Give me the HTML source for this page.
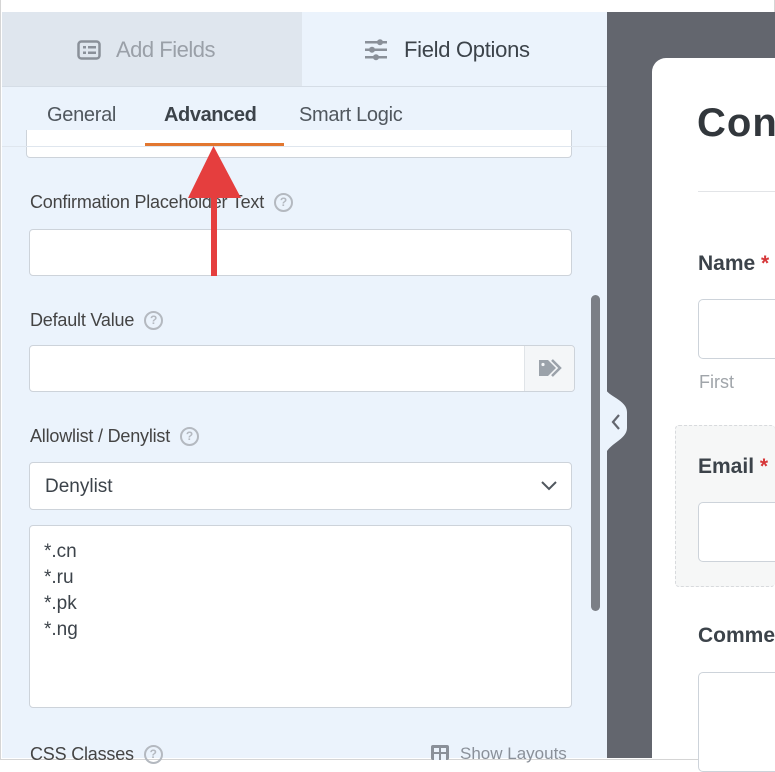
<!DOCTYPE html>
<html><head><meta charset="utf-8"><style>
*{box-sizing:border-box;margin:0;padding:0}
body{width:775px;height:760px;overflow:hidden;background:#fff;font-family:"Liberation Sans",sans-serif;position:relative}
.a{position:absolute}
.lbl{position:absolute;left:30px;font-size:18px;color:#444;letter-spacing:-0.2px}
.q{display:inline-block;width:19px;height:19px;border:2px solid #b4b9c0;border-radius:50%;font-size:12px;line-height:15px;text-align:center;color:#b4b9c0;font-weight:bold;vertical-align:2px;margin-left:10px;letter-spacing:0}
.inp{position:absolute;background:#fff;border:1px solid #cdd3da;border-radius:4px}
</style></head><body>
<div class="a" style="left:0;top:0;width:775px;height:760px;border:1px solid #d5d5d5;border-top:none"></div>
<div class="a" style="left:2px;top:12px;width:605px;height:746px;background:#ebf3fc"></div>
<div class="a" style="left:2px;top:12px;width:300px;height:74px;background:#dfe6ee"></div>
<div class="a" style="left:2px;top:86px;width:605px;height:1px;background:#d5dde6"></div>
<svg class="a" style="left:77px;top:40px" width="24" height="20" viewBox="0 0 24 20"><rect x="1.5" y="1.5" width="21" height="17" rx="3" fill="none" stroke="#8a9099" stroke-width="2.5"/><rect x="6" y="6" width="3" height="2.5" fill="#8a9099"/><rect x="11" y="6" width="8" height="2.5" fill="#8a9099"/><rect x="6" y="11.5" width="3" height="2.5" fill="#8a9099"/><rect x="11" y="11.5" width="8" height="2.5" fill="#8a9099"/></svg>
<div class="a" style="left:116px;top:37px;font-size:22px;color:#9aa0a8;letter-spacing:-0.5px">Add Fields</div>
<svg class="a" style="left:364px;top:38px" width="24" height="24" viewBox="0 0 24 24" fill="#8a9099"><rect x="1" y="3" width="22" height="2.5"/><rect x="1" y="10.5" width="22" height="2.5"/><rect x="1" y="18" width="22" height="2.5"/><circle cx="16" cy="4.2" r="3"/><circle cx="8" cy="11.7" r="3"/><circle cx="12" cy="19.2" r="3"/></svg>
<div class="a" style="left:404px;top:37px;font-size:22px;color:#3c434a;letter-spacing:-0.3px">Field Options</div>
<div class="a" style="left:47px;top:104px;font-size:20px;color:#50575e;letter-spacing:-0.3px">General</div>
<div class="a" style="left:164px;top:104px;font-size:20px;color:#3c434a;font-weight:bold;letter-spacing:-0.4px">Advanced</div>
<div class="a" style="left:299px;top:104px;font-size:20px;color:#50575e;letter-spacing:-0.3px">Smart Logic</div>
<div class="inp" style="left:26px;top:130px;width:546px;height:28px;border-top:none;border-radius:0 0 4px 4px"></div>
<div class="a" style="left:2px;top:146px;width:605px;height:1px;background:#dfe6ee"></div>
<div class="a" style="left:145px;top:143px;width:139px;height:3px;background:#e27730"></div>
<div class="lbl" style="top:192px">Confirmation Placeholder Text<span class="q">?</span></div>
<div class="inp" style="left:29px;top:229px;width:543px;height:47px"></div>
<div class="lbl" style="top:310px">Default Value<span class="q">?</span></div>
<div class="inp" style="left:29px;top:345px;width:546px;height:47px"></div>
<div class="a" style="left:524px;top:346px;width:50px;height:45px;background:#f4f6f8;border-left:1px solid #e0e4e8;border-radius:0 4px 4px 0"></div>
<svg class="a" style="left:537px;top:358px" width="26" height="20" viewBox="0 0 26 20"><path d="M2 2h9l8 8-8 8H2z" fill="#9ba2aa"/><circle cx="6" cy="6.5" r="1.6" fill="#f4f6f8"/><path d="M15 2l8 8-8 8" fill="none" stroke="#9ba2aa" stroke-width="2.5"/></svg>
<div class="lbl" style="top:426px">Allowlist / Denylist<span class="q">?</span></div>
<div class="inp" style="left:29px;top:462px;width:543px;height:48px"></div>
<div class="a" style="left:45px;top:476px;font-size:19px;color:#3c434a">Denylist</div>
<svg class="a" style="left:540px;top:480px" width="18" height="12" viewBox="0 0 18 12"><path d="M2 2l7 7 7-7" fill="none" stroke="#50575e" stroke-width="2"/></svg>
<div class="inp" style="left:29px;top:525px;width:543px;height:183px"></div>
<div class="a" style="left:44px;top:539px;font-size:19px;line-height:26px;color:#3c434a">*.cn<br>*.ru<br>*.pk<br>*.ng</div>
<div class="lbl" style="top:744px">CSS Classes<span class="q">?</span></div>
<svg class="a" style="left:430px;top:744px" width="20" height="16" viewBox="0 0 20 16" fill="#8a9099"><rect x="1" y="1" width="18" height="15" rx="2"/><rect x="4" y="4" width="5" height="4" fill="#ebf3fc"/><rect x="11" y="4" width="5" height="4" fill="#ebf3fc"/><rect x="4" y="10" width="5" height="6" fill="#ebf3fc"/><rect x="11" y="10" width="5" height="6" fill="#ebf3fc"/></svg>
<div class="a" style="left:460px;top:744px;font-size:17px;color:#8a9099">Show Layouts</div>
<div class="a" style="left:591px;top:295px;width:9px;height:316px;background:#7b7f86;border-radius:5px"></div>
<div class="a" style="left:607px;top:12px;width:168px;height:746px;background:#63666e"></div>
<svg class="a" style="left:605px;top:388px" width="26" height="68" viewBox="0 0 26 68"><path d="M0 0 C2 8 22 12 22 24 L22 40 C22 52 2 56 0 68Z" fill="#ebf3fc"/><path d="M14 27l-6 7 6 7" fill="none" stroke="#63666e" stroke-width="2.2"/></svg>
<div class="a" style="left:652px;top:58px;width:123px;height:700px;background:#fff;border-radius:14px 0 0 0"></div>
<div class="a" style="left:697px;top:101px;font-size:40px;color:#32373c;font-weight:bold;letter-spacing:1px">Cont</div>
<div class="a" style="left:698px;top:191px;width:77px;height:1px;background:#e2e4e7"></div>
<div class="a" style="left:698px;top:252px;font-size:21px;color:#3c434a;font-weight:bold">Name <span style="color:#d63638">*</span></div>
<div class="inp" style="left:698px;top:299px;width:90px;height:60px;border-radius:5px"></div>
<div class="a" style="left:699px;top:372px;font-size:18px;color:#a0a5aa">First</div>
<div class="a" style="left:675px;top:425px;width:100px;height:162px;background:#f6f7f7;border:1px dashed #d8dadd;border-radius:4px;border-right:none"></div>
<div class="a" style="left:698px;top:455px;font-size:21px;color:#3c434a;font-weight:bold">Email <span style="color:#d63638">*</span></div>
<div class="inp" style="left:698px;top:502px;width:90px;height:60px;border-radius:5px"></div>
<div class="a" style="left:698px;top:624px;font-size:21px;color:#3c434a;font-weight:bold">Comme</div>
<div class="inp" style="left:698px;top:672px;width:90px;height:100px;border-radius:5px"></div>
<div class="a" style="left:211px;top:195px;width:6px;height:81px;background:#e53e3e"></div>
<svg class="a" style="left:188px;top:145px" width="54" height="54" viewBox="0 0 54 54"><path d="M25.5 1L53 53H0z" fill="#e53e3e"/></svg>
</body></html>
